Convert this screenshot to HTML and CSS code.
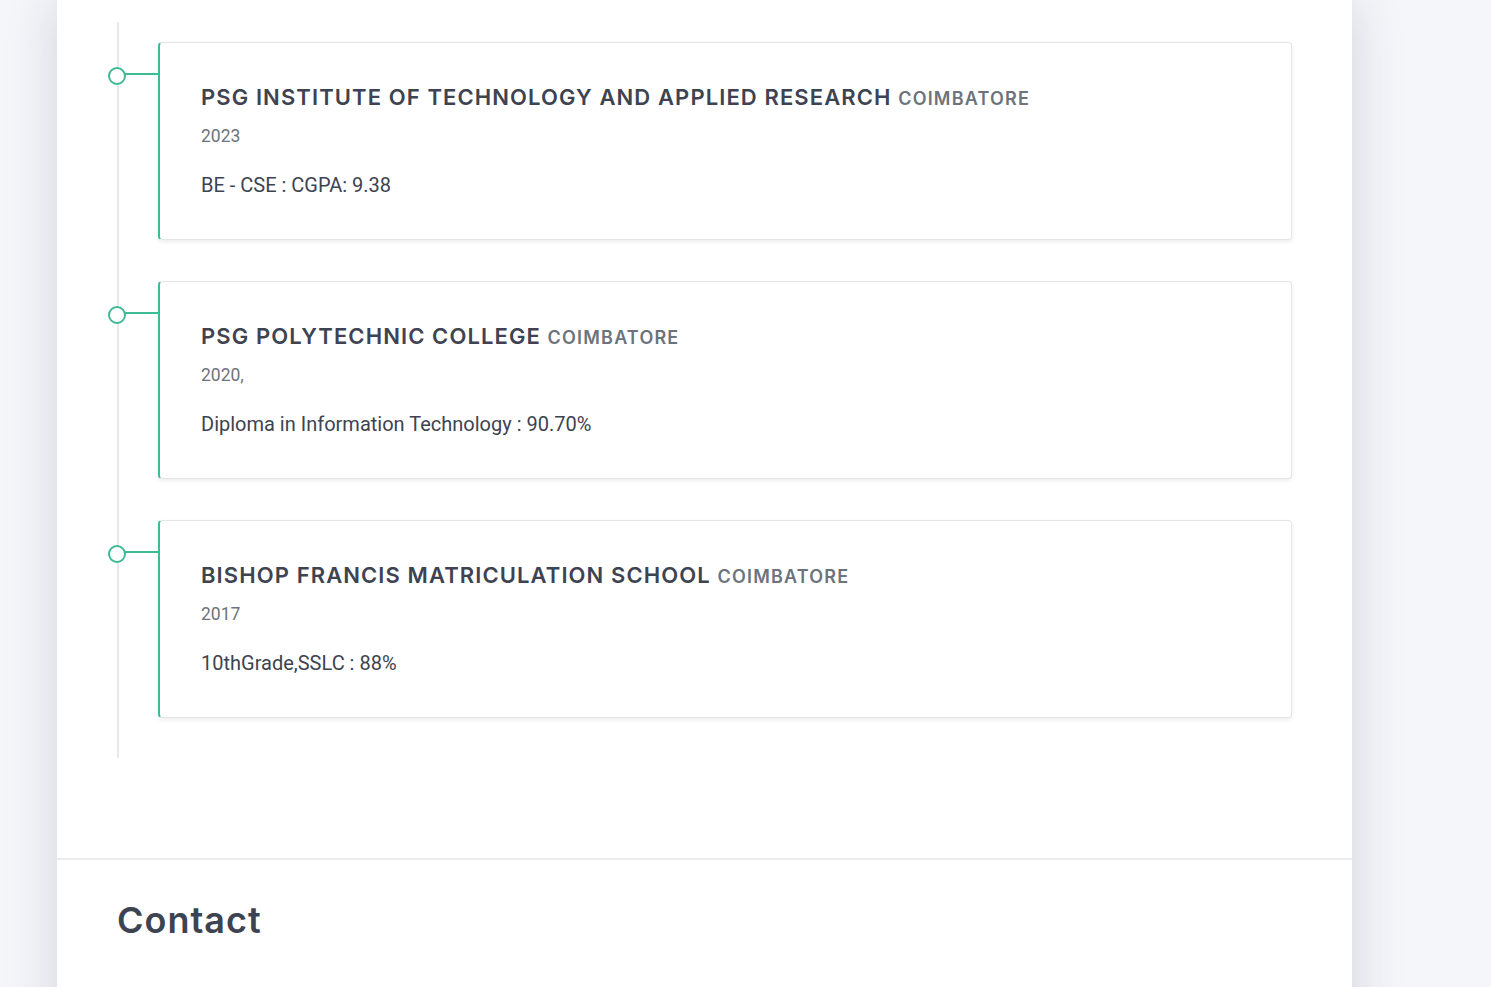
FILE: index.html
```html
<!DOCTYPE html>
<html lang="en">
<head>
<meta charset="utf-8">
<title>Education</title>
<link rel="stylesheet" href="styles.css">
</head>
<body>
<main class="page">
  <section class="education">
    <div class="timeline">
      <article class="edu-card">
        <h3 class="edu-title">PSG INSTITUTE OF TECHNOLOGY AND APPLIED RESEARCH <span class="edu-place">COIMBATORE</span></h3>
        <p class="edu-year">2023</p>
        <p class="edu-detail">BE - CSE : CGPA: 9.38</p>
      </article>
      <article class="edu-card">
        <h3 class="edu-title">PSG POLYTECHNIC COLLEGE <span class="edu-place">COIMBATORE</span></h3>
        <p class="edu-year">2020,</p>
        <p class="edu-detail">Diploma in Information Technology : 90.70%</p>
      </article>
      <article class="edu-card">
        <h3 class="edu-title">BISHOP FRANCIS MATRICULATION SCHOOL <span class="edu-place">COIMBATORE</span></h3>
        <p class="edu-year">2017</p>
        <p class="edu-detail">10thGrade,SSLC : 88%</p>
      </article>
    </div>
  </section>
  <section class="contact">
    <h2 class="section-title">Contact</h2>
  </section>
</main>
</body>
</html>
```

FILE: styles.css
```css
* { box-sizing: border-box; }

html, body {
  margin: 0;
  padding: 0;
}

body {
  background: #f5f6fa;
  font-family: Roboto, "Liberation Sans", sans-serif;
  color: #3d4350;
  overflow: hidden;
}

.page {
  width: 1295px;
  margin-left: 57px;
  min-height: 1200px;
  background: #ffffff;
  box-shadow: 0 0 50px rgba(30, 35, 55, 0.16);
}

.education {
  padding: 22px 60px 100px 60px;
  border-bottom: 2px solid #ececec;
}

.timeline {
  border-left: 2px solid #e9e9ea;
  padding: 20px 0 40px 39px;
  display: flex;
  flex-direction: column;
  gap: 41px;
}

.edu-card {
  position: relative;
  background: #fff;
  border: 1px solid #e4e5e7;
  border-left: 2px solid #3dba96;
  border-radius: 4px;
  box-shadow: 0 2px 4px rgba(0, 0, 0, 0.07);
  padding: 40px 40px 36px 41px;
  min-height: 198px;
}

.edu-card::before {
  content: "";
  position: absolute;
  left: -52px;
  top: 24px;
  width: 14px;
  height: 14px;
  border: 2px solid #3dba96;
  border-radius: 50%;
  background: #fff;
  z-index: 1;
}

.edu-card::after {
  content: "";
  position: absolute;
  left: -39px;
  top: 30px;
  width: 39px;
  height: 2px;
  background: #3dba96;
}

.edu-title {
  margin: 0;
  font-family: Inter, "Open Sans", sans-serif;
  font-weight: 600;
  font-size: 22px;
  line-height: 28px;
  letter-spacing: 1.1px;
  color: #3d4350;
}

.edu-place {
  font-size: 18px;
  font-weight: 600;
  letter-spacing: 1.2px;
  color: #6c737c;
}

.edu-year {
  margin: 11px 0 0 0;
  font-size: 17.5px;
  line-height: 24px;
  color: #6c737c;
}

.edu-detail {
  margin: 23px 0 0 0;
  font-size: 20px;
  line-height: 28px;
  color: #3d4350;
}

.contact {
  padding: 38px 60px 60px 60px;
}

.section-title {
  margin: 0;
  font-family: Inter, "Open Sans", sans-serif;
  font-weight: 600;
  font-size: 36px;
  line-height: 44px;
  letter-spacing: 1px;
  color: #3d4350;
}
```
